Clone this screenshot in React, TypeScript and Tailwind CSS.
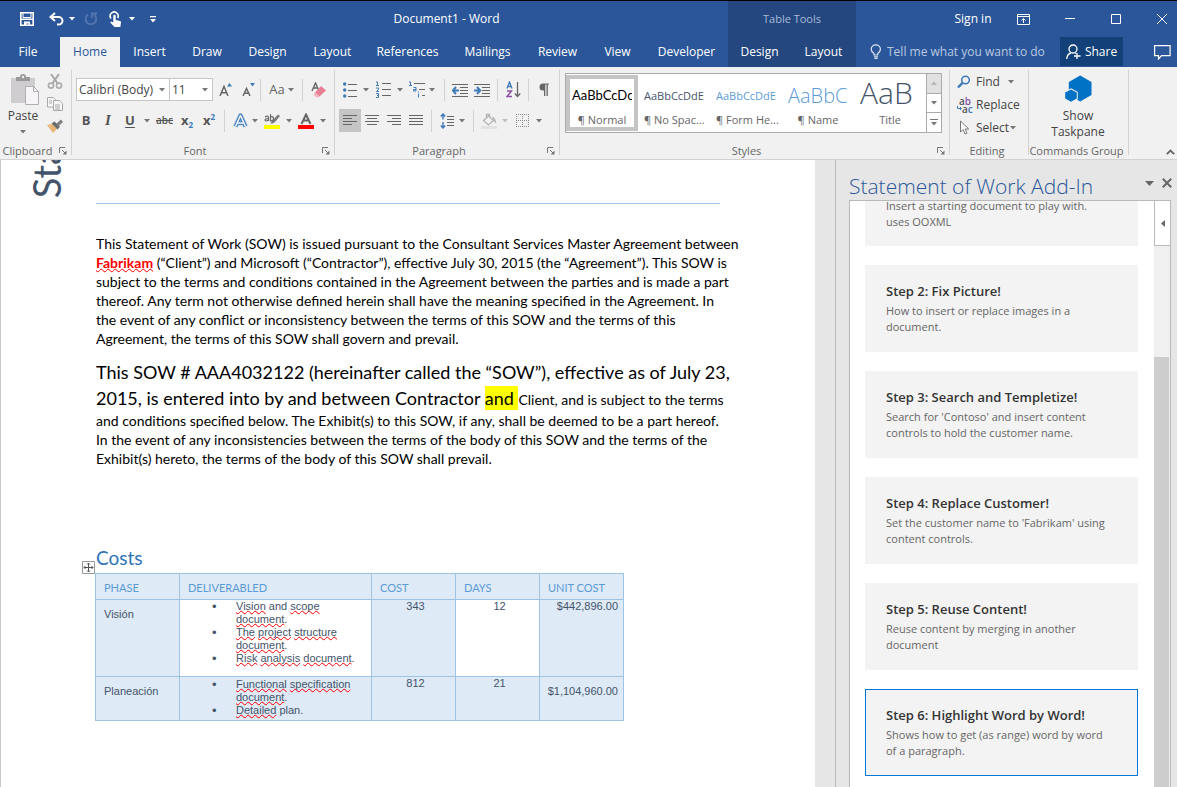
import React from "react";

const ui = "font-['Open_Sans','Noto_Sans',sans-serif]";

function Caret({ light = false }: { light?: boolean }) {
  return (
    <svg width="6" height="4" viewBox="0 0 6 4" className={light ? "fill-white" : "fill-[#777777]"} aria-hidden="true">
      <path d="M0 0h6L3 3.5z" />
    </svg>
  );
}

function Slot({ w, label, active, children }: { w: string; label: string; active?: boolean; children: React.ReactNode }) {
  return (
    <button
      type="button"
      aria-label={label}
      className={`${w} flex h-[23px] shrink-0 items-center justify-center ${active ? "bg-[#c5c5c5]" : ""}`}
    >
      {children}
    </button>
  );
}

function Rule({ m }: { m: string }) {
  return <span className={`${m} h-[22px] w-px shrink-0 bg-[#d2d2d2]`} />;
}

function Launcher() {
  return (
    <button type="button" aria-label="More options" className="ml-1">
      <svg width="8" height="8" viewBox="0 0 8 8" fill="none" stroke="#777" aria-hidden="true">
        <path d="M.5 6V.5H6M3 3l3.5 3.5" />
        <path d="M7.5 3.5v4h-4z" fill="#777" stroke="none" />
      </svg>
    </button>
  );
}

function Group({ w, label, launcher, children }: { w: string; label: string; launcher?: boolean; children: React.ReactNode }) {
  return (
    <section aria-label={label} className={`${w} flex shrink-0 flex-col`}>
      <div className="flex h-[76px] border-r border-[#d2d2d2] [border-image:linear-gradient(to_bottom,transparent_4px,#d2d2d2_4px)_1]">{children}</div>
      <div className="flex h-[12px] items-center border-r border-[#d2d2d2] pt-1 pr-1 text-[11px] whitespace-nowrap text-[#666666]">
        <span className="flex-1 text-center">{label}</span>
        {launcher && <Launcher />}
      </div>
    </section>
  );
}

function Lines({ rows, w = 15 }: { rows: number[][]; w?: number }) {
  return (
    <svg width={w} height="14" viewBox={`0 0 ${w} 14`} stroke="#666" fill="none" aria-hidden="true">
      {rows.map(([a, b], i) => (
        <path key={i} d={`M${a} ${i * 3 + 1.5}H${b}`} />
      ))}
    </svg>
  );
}

const tabs: [string, string][] = [
  ["Insert", "w-[59px]"],
  ["Draw", "w-[56px]"],
  ["Design", "w-[65px]"],
  ["Layout", "w-[65px]"],
  ["References", "w-[85px]"],
  ["Mailings", "w-[75px]"],
  ["Review", "w-[65px]"],
  ["View", "w-[55px]"],
  ["Developer", "w-[83px]"],
];

function TitleBar() {
  return (
    <div className="flex h-9 items-center">
      <div className="flex h-full w-[165px] items-center pl-5 text-white">
        <button type="button" aria-label="Save">
          <svg width="14" height="14" viewBox="0 0 14 14" fill="none" stroke="#fff" strokeWidth="1.6" aria-hidden="true">
            <path d="M.8.8h12.4v12.4H.8zM.8 7.2h12.4" />
            <path d="M3 1v4.500h8V1" strokeWidth="1" />
            <path d="M4 9.500h6v4H8.500v-2H6.500v2H4z" fill="#fff" stroke="none" />
          </svg>
        </button>
        <button type="button" aria-label="Undo" className="ml-[15px]">
          <svg width="15" height="14" viewBox="0 0 15 14" fill="none" stroke="#fff" strokeWidth="2" aria-hidden="true">
            <path d="M6 1L1.500 5 6 9M2 5h7.500a4 3.800 0 0 1 0 7.600H8" />
          </svg>
        </button>
        <button type="button" aria-label="Undo history" className="ml-[5px]"><Caret light /></button>
        <button type="button" aria-label="Repeat" className="ml-[9px]">
          <svg width="14" height="14" viewBox="0 0 14 14" fill="none" stroke="#5577af" strokeWidth="1.800" aria-hidden="true">
            <path d="M4 2.500A5.300 5.300 0 1 0 10.500 3M8 6V1.500h5" />
          </svg>
        </button>
        <button type="button" aria-label="Touch mode" className="ml-[11px]">
          <svg width="13" height="17" viewBox="0 0 13 17" fill="none" stroke="#fff" strokeWidth="1.600" aria-hidden="true">
            <path d="M2 7.500A4 4 0 1 1 8.700 7" />
            <path d="M4.300 5a1.200 1.200 0 0 1 2.400 0v4l4.300.9q1.200.3 1 1.500L11.300 16H5.500L1.200 11.500l1-1 2.100 1z" fill="#fff" stroke="none" />
          </svg>
        </button>
        <button type="button" aria-label="Touch mode menu" className="ml-[7px]"><Caret light /></button>
        <button type="button" aria-label="Customize toolbar" className="ml-[15px]">
          <svg width="6" height="7" viewBox="0 0 6 7" fill="#fff" aria-hidden="true"><path d="M0 0h6v1.200H0zM0 3h6L3 6.500z" /></svg>
        </button>
      </div>
      <h1 className="flex-1 text-center text-xs text-white">Document1 - Word</h1>
      <div className="flex h-full w-[128px] items-center justify-center bg-[#24477f] text-[11px] text-[#a9bcd9]">Table Tools</div>
      <div className="flex w-[321px] items-center text-xs text-white">
        <button type="button" className="ml-[86px] w-[62px] text-center">Sign in</button>
        <button type="button" aria-label="Ribbon display options" className="ml-[13px]">
          <svg width="13" height="11" viewBox="0 0 13 11" fill="none" stroke="#fff" aria-hidden="true">
            <path d="M.5.5h12v10H.5zM.5 2.500h12M6.500 9V4.500M4.500 6.500l2-2 2 2" />
          </svg>
        </button>
        <button type="button" aria-label="Minimize" className="ml-[35px]">
          <svg width="10" height="10" viewBox="0 0 10 10" stroke="#fff" aria-hidden="true"><path d="M0 4.500h10" /></svg>
        </button>
        <button type="button" aria-label="Maximize" className="ml-[36px]">
          <svg width="10" height="10" viewBox="0 0 10 10" stroke="#fff" fill="none" aria-hidden="true"><path d="M.5.5h9v9h-9z" /></svg>
        </button>
        <button type="button" aria-label="Close" className="ml-[36px]">
          <svg width="10" height="10" viewBox="0 0 10 10" stroke="#fff" aria-hidden="true"><path d="M0 0l10 10M10 0L0 10" /></svg>
        </button>
      </div>
    </div>
  );
}

function TabRow() {
  return (
    <nav className="flex h-[30px] items-stretch text-xs whitespace-nowrap text-white">
      <button type="button" className="w-[60px] pr-1">File</button>
      <button type="button" className="w-[60px] bg-[#f1f1f1] text-[#2b579a]">Home</button>
      {tabs.map(([t, w]) => (
        <button key={t} type="button" className={`${w} shrink-0 text-center`}>{t}</button>
      ))}
      <div className="flex flex-1 justify-end">
        <div className="flex w-[128px] bg-[#24477f]">
          <button type="button" className="w-[63px]">Design</button>
          <button type="button" className="w-[65px]">Layout</button>
        </div>
      </div>
      <div className="flex w-[321px] items-center">
        <svg width="12" height="16" viewBox="0 0 12 16" fill="none" stroke="#dfe7f3" strokeWidth="1.200" className="ml-[14px]" aria-hidden="true">
          <path d="M4 11V9.500Q1.200 7.800 1.200 5.200a4.600 4.400 0 0 1 9.200 0Q10.400 7.800 7.700 9.500V11zM4 12.800h4M4.500 14.500h3" />
        </svg>
        <input
          aria-label="Tell me what you want to do"
          placeholder="Tell me what you want to do"
          className="ml-[5px] w-[173px] bg-transparent outline-none placeholder:text-[#b9c8e0] placeholder:opacity-100"
        />
        <button type="button" className="mb-px flex h-[29px] w-[63px] items-center justify-center gap-1 self-start bg-[#124078]">
          <svg width="15" height="16" viewBox="0 0 15 16" fill="none" stroke="#fff" strokeWidth="1.300" aria-hidden="true">
            <circle cx="7" cy="5" r="4" />
            <path d="M.8 15Q1 10 5 9M9 8.800l1 .8M11 9v6M8 12h6.500" />
          </svg>
          Share
        </button>
        <button type="button" aria-label="Comments" className="ml-[31px]">
          <svg width="17" height="15" viewBox="0 0 17 15" fill="none" stroke="#fff" strokeWidth="1.200" aria-hidden="true">
            <path d="M.6.6h15.500v10H7.500L4.500 14v-3.400H.6z" />
          </svg>
        </button>
      </div>
    </nav>
  );
}

function Clipboard() {
  return (
    <Group w="w-[72px]" label="Clipboard" launcher>
      <button type="button" className="flex w-[46px] flex-col items-center pt-[7px] text-xs text-[#444]">
        <svg width="30" height="31" viewBox="0 0 30 31" className="ml-1" aria-hidden="true">
          <path d="M1 4h24v25H1z" fill="#cfcdcf" />
          <path d="M6 7V3h4a3 3 0 0 1 6 0h4v4z" fill="#9a989a" />
          <circle cx="13" cy="3" r="1.200" fill="#f1f1f1" />
          <path d="M15.500 12.500h8l5 5v13h-13z" fill="#f7f3f7" stroke="#b0aeb0" />
          <path d="M23.500 12.500v5h5" fill="none" stroke="#b0aeb0" />
        </svg>
        <span className="pt-px leading-[20px]">Paste</span>
        <span className="pt-1"><Caret /></span>
      </button>
      <div className="flex flex-col items-center gap-2 pt-[7px] pl-px">
        <button type="button" aria-label="Cut">
          <svg width="16" height="15" viewBox="0 0 16 15" fill="none" stroke="#a9a7a9" strokeWidth="1.500" aria-hidden="true">
            <path d="M4 0l7 10M12 0L5 10" strokeWidth="2" />
            <circle cx="4" cy="11.500" r="2.600" />
            <circle cx="12" cy="11.500" r="2.600" />
          </svg>
        </button>
        <button type="button" aria-label="Copy">
          <svg width="16" height="14" viewBox="0 0 16 14" fill="#f7f7f7" stroke="#a9a7a9" aria-hidden="true">
            <path d="M.5.5h6l2 2v7.500h-8z" />
            <path d="M6.500 3.500h6l3 3v7h-9zM2 4h3M2 6h3M8 8h5M8 10h5M8 12h5" />
          </svg>
        </button>
        <button type="button" aria-label="Format painter">
          <svg width="16" height="14" viewBox="0 0 16 14" aria-hidden="true">
            <path d="M0 6l5-1 5 5-4 4z" fill="#eab676" />
            <path d="M4.500 4.500l3-2 5.500 5-2.500 3z" fill="#6b6b6b" />
            <path d="M9 5l5-4.500L16 3l-5 4.500z" fill="#7f7f7f" />
          </svg>
        </button>
      </div>
    </Group>
  );
}

function FontGroup() {
  const strong = "text-[13px] font-bold text-[#555]";
  return (
    <Group w="w-[263px]" label="Font" launcher>
      <div className="flex flex-col gap-2 pt-[11px]">
        <div className="flex h-[23px] items-center pl-1">
          <div className="relative flex w-[94px] items-center border border-[#c6c6c6] bg-white">
            <select aria-label="Font" className="h-[21px] w-full appearance-none bg-transparent pl-[2px] text-xs text-[#444] outline-none">
              <option>Calibri (Body)</option>
            </select>
            <span className="pointer-events-none absolute right-1"><Caret /></span>
          </div>
          <div className="relative -ml-px flex w-[44px] items-center border border-[#c6c6c6] bg-white">
            <select aria-label="Font size" className="h-[21px] w-full appearance-none bg-transparent pl-[2px] text-xs text-[#444] outline-none">
              <option>11</option>
            </select>
            <span className="pointer-events-none absolute right-1"><Caret /></span>
          </div>
          <Slot w="w-[24px]" label="Grow font">
            <svg width="13" height="14" viewBox="0 0 13 14" fill="none" stroke="#666" strokeWidth="1.500" aria-hidden="true">
              <path d="M1 13L5 3.500 9 13M2.500 9.800h5" />
              <path d="M8 3.500L10.500 0 13 3.500z" fill="#3e7ab8" stroke="none" />
            </svg>
          </Slot>
          <Slot w="w-[22px]" label="Shrink font">
            <svg width="13" height="14" viewBox="0 0 13 14" fill="none" stroke="#666" strokeWidth="1.500" aria-hidden="true">
              <path d="M1 13L4.500 5.500 8 13M2.300 10.200h4.400" />
              <path d="M8 0h5l-2.500 3.500z" fill="#3e7ab8" stroke="none" />
            </svg>
          </Slot>
          <Rule m="ml-px" />
          <Slot w="w-[41px]" label="Change case">
            <span className="mr-[3px] text-[13px] text-[#666]">Aa</span>
            <Caret />
          </Slot>
          <Rule m="" />
          <Slot w="w-[31px]" label="Clear formatting">
            <svg width="15" height="16" viewBox="0 0 15 16" aria-hidden="true">
              <path d="M1 9L4.500 1 8 9M2.300 6h4.500" fill="none" stroke="#666" strokeWidth="1.400" />
              <path d="M10 4l5 4.500-6.500 6L4 10.500z" fill="#e87f93" />
              <path d="M4 10.500l4.500 4-1 1H5.500L2.500 12.500z" fill="#f2b3be" />
            </svg>
          </Slot>
        </div>
        <div className="flex h-[23px] items-center pl-[3px]">
          <Slot w="w-[22px]" label="Bold"><span className={strong}>B</span></Slot>
          <Slot w="w-[22px]" label="Italic"><span className="font-['Liberation_Serif',serif] text-[15px] font-bold text-[#555] italic">I</span></Slot>
          <Slot w="w-[22px]" label="Underline"><span className={`${strong} underline underline-offset-2`}>U</span></Slot>
          <Slot w="w-[12px]" label="Underline style"><Caret /></Slot>
          <Slot w="w-[23px]" label="Strikethrough"><span className="text-[10px] font-semibold text-[#555] line-through">abc</span></Slot>
          <Slot w="w-[22px]" label="Subscript"><span className={strong}>x</span><span className="pt-2 text-[8px] font-bold text-[#3e7ab8]">2</span></Slot>
          <Slot w="w-[22px]" label="Superscript"><span className={strong}>x</span><span className="pb-2 text-[8px] font-bold text-[#3e7ab8]">2</span></Slot>
          <Rule m="mx-1" />
          <Slot w="w-[22px]" label="Text effects">
            <svg width="15" height="16" viewBox="0 0 15 16" fill="none" strokeLinejoin="round" aria-hidden="true">
              <path d="M2.500 13.500L7.500 2.500 12.500 13.500M4.500 10h6" stroke="#a9c8e6" strokeWidth="5" />
              <path d="M2.500 13.500L7.500 2.500 12.500 13.500M4.500 10h6" stroke="#3e7ab8" strokeWidth="3.600" />
              <path d="M2.500 13.500L7.500 2.500 12.500 13.500M4.500 10h6" stroke="#f1f6fb" strokeWidth="1.600" />
            </svg>
          </Slot>
          <Slot w="w-[7px]" label="Text effects menu"><Caret /></Slot>
          <Slot w="w-[28px]" label="Highlight">
            <svg width="16" height="16" viewBox="0 0 16 16" aria-hidden="true">
              <path d="M1 4q3-2 3.500.5V8M4.500 5.500Q1 5.500 1 7q.5 2 3.500 0M6.500 1v7q3 0 3-2.500T6.500 4" fill="none" stroke="#666" strokeWidth="1.200" />
              <path d="M14 1.500l2 1.500-5 6-2.500 1.500H6.500L8 8z" fill="#777" />
              <path d="M0 12h16v4H0z" fill="#ffff00" />
            </svg>
          </Slot>
          <Slot w="w-[6px]" label="Highlight menu"><Caret /></Slot>
          <Slot w="w-[28px]" label="Font color">
            <svg width="16" height="16" viewBox="0 0 16 16" aria-hidden="true">
              <path d="M3.500 11L8 1.500 12.500 11M5 7.500h6" fill="none" stroke="#666" strokeWidth="2" />
              <path d="M0 12h16v4H0z" fill="#ff0000" />
            </svg>
          </Slot>
          <Slot w="w-[6px]" label="Font color menu"><Caret /></Slot>
        </div>
      </div>
    </Group>
  );
}

function ParagraphGroup() {
  const blue = "#3e7ab8";
  return (
    <Group w="w-[225px]" label="Paragraph" launcher>
      <div className="flex flex-col gap-2 pt-[11px]">
        <div className="flex h-[23px] items-center pl-1">
          <Slot w="w-[22px]" label="Bullets">
            <svg width="14" height="16" viewBox="0 0 14 16" stroke="#666" aria-hidden="true">
              <path d="M5 2.500h9M5 8.500h9M5 14.500h9" />
              <g fill={blue} stroke="none"><circle cx="1.700" cy="2" r="1.700" /><circle cx="1.700" cy="8" r="1.700" /><circle cx="1.700" cy="14" r="1.700" /></g>
            </svg>
          </Slot>
          <Slot w="w-[10px]" label="Bullet library"><Caret /></Slot>
          <Slot w="w-[24px]" label="Numbering">
            <svg width="15" height="17" viewBox="0 0 15 17" fill="none" stroke="#666" aria-hidden="true">
              <path d="M6 2.500h9M6 8.500h9M6 14.500h9" />
              <path d="M0 1h1.500v4M0 4.500h3M0 7h2.500v1.500L.5 10.500H3M0 12.500h2.500v4H0M1 14.500h1.500" stroke={blue} />
            </svg>
          </Slot>
          <Slot w="w-[9px]" label="Numbering library"><Caret /></Slot>
          <Slot w="w-[25px]" label="Multilevel list">
            <svg width="16" height="17" viewBox="0 0 16 17" fill="none" stroke="#666" aria-hidden="true">
              <path d="M5 2.500h11M10 8.500h6M13 14.500h3" />
              <path d="M0 1h1.500v3.500M0 4.500h3M4.500 6.500h2.500v3.500H4.500V8.500H7M9.500 10.500v1M9.500 12.500v4" stroke={blue} />
            </svg>
          </Slot>
          <Slot w="w-[6px]" label="Multilevel library"><Caret /></Slot>
          <Rule m="ml-[9px] mr-[4px]" />
          <Slot w="w-[22px]" label="Decrease indent">
            <svg width="16" height="14" viewBox="0 0 16 14" fill="none" stroke="#666" aria-hidden="true">
              <path d="M0 1.500h16M8 4.500h8M8 7.500h8M8 10.500h8M0 13.500h16" /><path d="M7 7.500H1M4 4L.8 7.500 4 11" stroke={blue} strokeWidth="2" />
            </svg>
          </Slot>
          <Slot w="w-[22px]" label="Increase indent">
            <svg width="16" height="14" viewBox="0 0 16 14" fill="none" stroke="#666" aria-hidden="true">
              <path d="M0 1.500h16M8 4.500h8M8 7.500h8M8 10.500h8M0 13.500h16" /><path d="M0 7.500h6M3 4l3.200 3.500L3 11" stroke={blue} strokeWidth="2" />
            </svg>
          </Slot>
          <Rule m="ml-[4px] mr-[4px]" />
          <Slot w="w-[22px]" label="Sort">
            <svg width="15" height="17" viewBox="0 0 15 17" fill="none" aria-hidden="true">
              <path d="M1 7.500L3.500 1 6 7.500M2 5.500h3" stroke={blue} strokeWidth="1.300" />
              <path d="M1 10h4.500L1 15.500h5" stroke="#8a4fa3" strokeWidth="1.400" />
              <path d="M11.500 1v14M8.800 12.500l2.700 3 2.700-3" stroke="#666" strokeWidth="1.300" />
            </svg>
          </Slot>
          <Rule m="mx-1" />
          <Slot w="w-[22px]" label="Show paragraph marks">
            <svg width="10" height="13" viewBox="0 0 10 13" aria-hidden="true">
              <path d="M5 7.500H4A3.500 3.500 0 0 1 4 .5h6v1H8.800V13H7.500V1.500H6.300V13H5z" fill="#666" />
            </svg>
          </Slot>
        </div>
        <div className="flex h-[23px] items-center pl-1">
          <Slot w="w-[22px]" label="Align left" active><Lines rows={[[0, 14], [0, 9], [0, 14], [0, 9]]} /></Slot>
          <Slot w="w-[22px]" label="Center"><Lines rows={[[0, 14], [2, 12], [0, 14], [2, 12]]} /></Slot>
          <Slot w="w-[22px]" label="Align right"><Lines rows={[[0, 14], [5, 14], [0, 14], [5, 14]]} /></Slot>
          <Slot w="w-[22px]" label="Justify"><Lines rows={[[0, 14], [0, 14], [0, 14], [0, 14]]} /></Slot>
          <Rule m="mx-1" />
          <Slot w="w-[21px]" label="Line spacing">
            <svg width="14" height="16" viewBox="0 0 14 16" fill="none" stroke="#666" aria-hidden="true">
              <path d="M7 3.500h7M7 6.500h7M7 9.500h7M7 12.500h7" /><path d="M3 1v5.500M3 9v6M.8 3.500L3 1l2.200 2.500M.8 12.500L3 15l2.200-2.500" stroke={blue} strokeWidth="1.400" />
            </svg>
          </Slot>
          <Slot w="w-[9px]" label="Line spacing menu"><Caret /></Slot>
          <Rule m="ml-[7px] mr-[4px]" />
          <Slot w="w-[22px]" label="Shading">
            <svg width="16" height="16" viewBox="0 0 16 16" fill="none" stroke="#b5b5b5" strokeWidth="1.300" aria-hidden="true">
              <path d="M2.500 7.500L7.500 3l5 4.500-5 4.500zM5.500 6V1.500h3V5" /><path d="M11 3.500q4 1 4 7l-2-2z" fill="#b5b5b5" stroke="none" /><path d="M0 13h16v3H0z" fill="#e2e2e2" stroke="none" />
            </svg>
          </Slot>
          <Slot w="w-[9px]" label="Shading menu"><span className="opacity-40"><Caret /></span></Slot>
          <Slot w="w-[26px]" label="Borders">
            <svg width="13" height="14" viewBox="0 0 13 14" fill="none" stroke="#8a8a8a" strokeDasharray="1 1" aria-hidden="true">
              <path d="M.5 0v13M12.500 0v13M6.500 0v13M0 .5h13M0 6.500h13M0 12.500h13" />
            </svg>
          </Slot>
          <Slot w="w-[8px]" label="Borders menu"><Caret /></Slot>
        </div>
      </div>
    </Group>
  );
}

const styleItems: [string, string, string][] = [
  ["AaBbCcDc", "text-[13px] text-black font-['Lato',sans-serif]", "¶ Normal"],
  ["AaBbCcDdE", "text-[11px] text-[#44546a] font-['Open_Sans',sans-serif]", "¶ No Spac..."],
  ["AaBbCcDdE", "text-[11px] text-[#5b9bd5] font-['Open_Sans',sans-serif]", "¶ Form He..."],
  ["AaBbC", "text-[20px] text-[#5b9bd5] font-light font-['Open_Sans',sans-serif]", "¶ Name"],
  ["AaB", "pb-2 text-[30px] text-[#44546a] font-light font-['Open_Sans',sans-serif]", "Title"],
];

function StylesGroup() {
  return (
    <Group w="w-[390px]" label="Styles" launcher>
      <div className="mt-[6px] ml-[5px] flex h-[60px] w-[377px] border border-[#ababab] bg-white">
        {styleItems.map(([sample, cls, name], i) => (
          <button
            key={name}
            type="button"
            className={`my-px flex w-[72px] shrink-0 flex-col border-4 px-[2px] text-[#666] ${i === 0 ? "border-[#c5c5c5]" : "border-transparent"}`}
          >
            <span className={`flex h-[34px] w-full items-center overflow-hidden whitespace-nowrap ${cls}`}>{sample}</span>
            <span className="w-full text-center text-[11px] leading-[14px] whitespace-nowrap">{name}</span>
          </button>
        ))}
        <div className="ml-auto flex w-[15px] flex-col border-l border-[#ababab]">
          <button type="button" aria-label="Scroll up" className="flex flex-1 items-center justify-center bg-[#e1e1e1]">
            <svg width="6" height="4" viewBox="0 0 6 4" fill="#b5b5b5" aria-hidden="true"><path d="M0 4h6L3 .5z" /></svg>
          </button>
          <button type="button" aria-label="Scroll down" className="flex flex-1 items-center justify-center border-y border-[#ababab]"><Caret /></button>
          <button type="button" aria-label="More styles" className="flex flex-1 items-center justify-center">
            <svg width="8" height="8" viewBox="0 0 8 8" fill="#777" aria-hidden="true"><path d="M0 0h8v1H0zM1 3h6L4 6.500z" /></svg>
          </button>
        </div>
      </div>
    </Group>
  );
}

function EditingGroup() {
  return (
    <Group w="w-[79px]" label="Editing">
      <div className="flex flex-col pt-[3px] pl-[7px] text-xs text-[#444]">
        <button type="button" className="flex h-[23px] items-center">
          <svg width="14" height="14" viewBox="0 0 14 14" fill="none" stroke="#3e7ab8" aria-hidden="true">
            <circle cx="8.500" cy="5" r="3.800" strokeWidth="1.500" /><path d="M5.500 7.800L1 12.500" strokeWidth="2.400" />
          </svg>
          <span className="mr-2 ml-[5px]">Find</span><Caret />
        </button>
        <button type="button" className="flex h-[23px] items-center">
          <span className="flex w-[16px] flex-col text-[10px] leading-[8px] font-semibold">
            <span className="text-[#555]">a<span className="text-[#8a4fa3]">b</span></span>
            <span className="flex items-center text-[#3e7ab8]">
              <svg width="5" height="5" viewBox="0 0 5 5" fill="none" stroke="#3e7ab8" aria-hidden="true"><path d="M.5 0v2.500H4M3 1l1.500 1.500L3 4" /></svg>
              <span className="text-[#555]">a</span>c
            </span>
          </span>
          <span className="ml-[3px]">Replace</span>
        </button>
        <button type="button" className="flex h-[23px] items-center">
          <svg width="14" height="15" viewBox="0 0 14 15" fill="#fff" stroke="#777" aria-hidden="true">
            <path d="M3.500 1v11l2.700-2.500L8 14l2-.8-1.800-4.200h3.500z" />
          </svg>
          <span className="mr-px ml-[5px]">Select</span><Caret />
        </button>
      </div>
    </Group>
  );
}

function Ribbon() {
  return (
    <div className="flex h-[93px] border-b border-[#d2d2d2] bg-[#f1f1f1]">
      <Clipboard />
      <FontGroup />
      <ParagraphGroup />
      <StylesGroup />
      <EditingGroup />
      <Group w="w-[100px]" label="Commands Group">
        <button type="button" className="flex w-full flex-col items-center pt-[8px] pr-px text-xs leading-[16px] text-[#444]">
          <svg width="28" height="28" viewBox="0 0 28 28" fill="#0072c6" className="mb-[5px]" aria-hidden="true">
            <path d="M16.200.6L27.500 7v13L16.200 26.500 4.800 20V7z" />
            <path d="M7 13.200l6.800 3.800v7.200L7 28 .2 24.200V17z" fill="#f1f1f1" />
            <path d="M7 14.400l5.800 3.200v6L7 26.800 1.200 23.600v-6z" />
          </svg>
          <span>Show</span>
          <span>Taskpane</span>
        </button>
      </Group>
      <div className="flex flex-1 items-end justify-end pr-[2px] pb-1">
        <button type="button" aria-label="Collapse ribbon">
          <svg width="9" height="6" viewBox="0 0 9 6" fill="none" stroke="#666" strokeWidth="1.800" aria-hidden="true"><path d="M.8 5.200l3.700-3.700 3.700 3.700" /></svg>
        </button>
      </div>
    </div>
  );
}

function Sq({ children }: { children: React.ReactNode }) {
  return (
    <span className="underline decoration-[#ff0000] decoration-wavy decoration-1 underline-offset-0 [text-decoration-skip-ink:none]">{children}</span>
  );
}

function Item({ children }: { children: React.ReactNode }) {
  return (
    <li className="flex">
      <span className="w-[24px] text-[13px]">•</span>
      <span className="flex-1 whitespace-nowrap">{children}</span>
    </li>
  );
}

function CostTable() {
  const cell = "border border-[#9dc3e6] align-top font-normal";
  const shade = "bg-[#deeaf6]";
  const head = `${cell} ${shade} px-2 pt-[7px] text-left font-['Lato',sans-serif] text-[11px]`;
  return (
    <table className="-ml-px w-[529px] table-fixed border-collapse font-['Liberation_Sans',Arial,sans-serif] text-[11px] leading-[13px] text-[#44546a]">
      <colgroup>
        <col className="w-[84px]" />
        <col className="w-[192px]" />
        <col className="w-[84px]" />
        <col className="w-[84px]" />
        <col className="w-[84px]" />
      </colgroup>
      <thead>
        <tr className="h-[26px] text-[#5b9bd5]">
          {["PHASE", "DELIVERABLED", "COST", "DAYS", "UNIT COST"].map((h) => (
            <th key={h} className={head}>{h}</th>
          ))}
        </tr>
      </thead>
      <tbody>
        <tr className="h-[77px]">
          <th className={`${cell} ${shade} px-2 pt-2 text-left`}>Visión</th>
          <td className={`${cell} pl-8`}>
            <ul>
              <Item><Sq>Vision</Sq> and <Sq>scope</Sq><br /><Sq>document</Sq>.</Item>
              <Item><Sq>The</Sq> <Sq>project</Sq> <Sq>structure</Sq><br /><Sq>document</Sq>.</Item>
              <Item><Sq>Risk</Sq> <Sq>analysis</Sq> <Sq>document</Sq>.</Item>
            </ul>
          </td>
          <td className={`${cell} ${shade} pl-1 text-center`}>343</td>
          <td className={`${cell} pl-1 text-center`}>12</td>
          <td className={`${cell} ${shade} pr-[5px] text-right`}>$442,896.00</td>
        </tr>
        <tr className="h-[44px]">
          <th className={`${cell} ${shade} px-2 pt-2 text-left`}>Planeación</th>
          <td className={`${cell} ${shade} pt-px pl-8`}>
            <ul>
              <Item><Sq>Functional</Sq> <Sq>specification</Sq><br /><Sq>document</Sq>.</Item>
              <Item><Sq>Detailed</Sq> plan.</Item>
            </ul>
          </td>
          <td className={`${cell} ${shade} pl-1 text-center`}>812</td>
          <td className={`${cell} ${shade} pl-1 text-center`}>21</td>
          <td className={`${cell} ${shade} pt-2 pr-[5px] text-right`}>$1,104,960.00</td>
        </tr>
      </tbody>
    </table>
  );
}

function Document() {
  return (
    <main className="flex min-w-0 flex-1 border-l border-[#c6c6c6] bg-white font-['Lato',sans-serif] text-black">
      <div className="flex w-[95px] shrink-0 flex-col">
        <div className="flex h-[38px] flex-col items-center justify-end overflow-hidden pr-[6px]">
          <span className="rotate-180 text-[38px] leading-[38px] text-[#44546a] [writing-mode:vertical-rl]">Sta</span>
        </div>
        <div className="flex flex-col items-end pt-[363px] pr-px">
          <svg width="13" height="13" viewBox="0 0 13 13" fill="none" stroke="#555" className="bg-white" aria-hidden="true">
            <path d="M.5.5h12v12H.5z" stroke="#999" />
            <path d="M6.500 2v9M2 6.500h9M5 3.500l1.500-1.500L8 3.500M5 9.500L6.500 11 8 9.500M3.500 5L2 6.500 3.500 8M9.500 5L11 6.500 9.500 8" />
          </svg>
        </div>
      </div>
      <article className="w-[624px] pt-[43px]">
        <hr className="border-[#9dc3e6]" />
        <p className="mt-[30px] text-[14px] leading-[19px] whitespace-nowrap">
          This Statement of Work (SOW) is issued pursuant to the Consultant Services Master Agreement between<br />
          <span className="font-bold text-[#ff0000]"><Sq>Fabrikam</Sq></span> (“Client”) and Microsoft (“Contractor”), effective July 30, 2015 (the “Agreement”). This SOW is<br />
          subject to the terms and conditions contained in the Agreement between the parties and is made a part<br />
          thereof. Any term not otherwise defined herein shall have the meaning specified in the Agreement. In<br />
          the event of any conflict or inconsistency between the terms of this SOW and the terms of this<br />
          Agreement, the terms of this SOW shall govern and prevail.
        </p>
        <p className="mt-[11px] text-[18px] leading-[26px] whitespace-nowrap">
          This SOW # AAA4032122 (hereinafter called the “SOW”), effective as of July 23,<br />
          2015, is entered into by and between Contractor <mark className="bg-[#ffff00] py-px">and </mark>
          <span className="text-[14px] leading-none">Client, and is subject to the terms</span>
        </p>
        <p className="text-[14px] leading-[19px] whitespace-nowrap">
          and conditions specified below. The Exhibit(s) to this SOW, if any, shall be deemed to be a part hereof.<br />
          In the event of any inconsistencies between the terms of the body of this SOW and the terms of the<br />
          Exhibit(s) hereto, the terms of the body of this SOW shall prevail.
        </p>
        <h2 className="mt-[78px] mb-[3px] text-[19px] leading-[24px] text-[#2e74b5]">Costs</h2>
        <CostTable />
      </article>
    </main>
  );
}

const steps: [string, string, string][] = [
  ["Step 2: Fix Picture!", "How to insert or replace images in a", "document."],
  ["Step 3: Search and Templetize!", "Search for 'Contoso' and insert content", "controls to hold the customer name."],
  ["Step 4: Replace Customer!", "Set the customer name to 'Fabrikam' using", "content controls."],
  ["Step 5: Reuse Content!", "Reuse content by merging in another", "document"],
  ["Step 6: Highlight Word by Word!", "Shows how to get (as range) word by word", "of a paragraph."],
];

function TaskPane() {
  const desc = "text-[11px] leading-[16px] text-[#666]";
  return (
    <aside className="flex w-[342px] shrink-0 flex-col border-l border-[#b9b9b9] pl-[13px]">
      <div className="flex h-[40px] items-end">
        <h2 className="flex-1 text-[21px] leading-[28px] font-light whitespace-nowrap text-[#2b579a]">Statement of Work Add-In</h2>
        <button type="button" aria-label="Pane options" className="mb-[14px]">
          <svg width="9" height="5" viewBox="0 0 9 5" fill="#666" aria-hidden="true"><path d="M0 0h9L4.500 5z" /></svg>
        </button>
        <button type="button" aria-label="Close pane" className="mr-[5px] mb-[12px] ml-[8px]">
          <svg width="10" height="10" viewBox="0 0 10 10" stroke="#666" strokeWidth="2" aria-hidden="true"><path d="M.8.8l8.400 8.400M9.200.8L.8 9.200" /></svg>
        </button>
      </div>
      <div className="mr-[6px] flex min-h-0 flex-1 overflow-hidden border border-b-0 border-[#b9b9b9] bg-white">
        <div className="flex flex-1 flex-col gap-[19px] pr-[16px] pl-[15px]">
          <div className="flex h-[45px] shrink-0 flex-col justify-end overflow-hidden bg-[#f3f3f3] pb-[16px] pl-[21px]">
            <p className={desc}>Insert a starting document to play with.<br />uses OOXML</p>
          </div>
          {steps.map(([t, a, b], i) => (
            <button
              key={t}
              type="button"
              className={`flex h-[87px] shrink-0 flex-col items-start border bg-[#f3f3f3] pt-[14px] pl-5 text-left whitespace-nowrap ${i === 4 ? "border-[#0078d7]" : "border-transparent"}`}
            >
              <span className="text-[13px] leading-[23px] font-semibold text-[#333]">{t}</span>
              <span className={desc}>{a}<br />{b}</span>
            </button>
          ))}
        </div>
        <div className="flex w-[16px] flex-col bg-[#f0f0f0]">
          <button type="button" aria-label="Collapse" className="flex h-[45px] items-center justify-center border border-t-0 border-r-0 border-[#b9b9b9] bg-white">
            <svg width="4" height="7" viewBox="0 0 4 7" fill="#666" aria-hidden="true"><path d="M4 0v7L0 3.500z" /></svg>
          </button>
          <div className="mt-[111px] mr-px flex-1 bg-[#cdcdcd]" />
        </div>
      </div>
    </aside>
  );
}

export default function App() {
  return (
    <div className={`flex h-screen flex-col overflow-hidden bg-[#e6e6e6] ${ui}`}>
      <header className="shrink-0 border-t border-black bg-[#2b579a]">
        <TitleBar />
        <TabRow />
        <Ribbon />
      </header>
      <div className="flex min-h-0 flex-1">
        <Document />
        <div className="w-[20px] shrink-0" />
        <TaskPane />
      </div>
    </div>
  );
}
